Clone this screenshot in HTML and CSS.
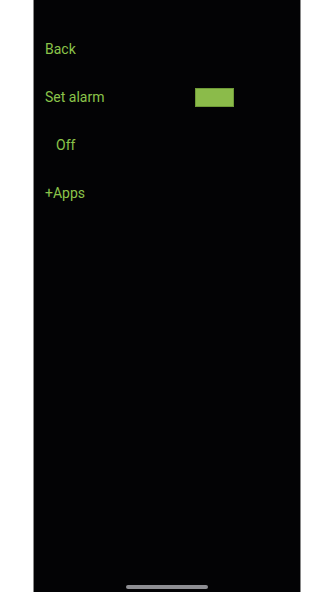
FILE: index.html
```html
<!DOCTYPE html>
<html>
<head>
<meta charset="utf-8">
<link rel="stylesheet" href="styles.css">
</head>
<body>
<div class="screen">
  <div class="menu">
    <div class="row">Back</div>
    <div class="row row-split">
      <span>Set alarm</span>
      <span class="toggle"></span>
    </div>
    <div class="row row-indent">Off</div>
    <div class="row">+Apps</div>
  </div>
  <div class="home-indicator"></div>
</div>
</body>
</html>
```
FILE: styles.css
```css
html, body {
  margin: 0;
  padding: 0;
  background: #ffffff;
}
.screen {
  box-sizing: content-box;
  margin-left: 33px;
  width: 266px;
  height: 592px;
  background: #030305;
  border-left: 1px solid #8a8a8a;
  border-right: 1px solid #8a8a8a;
  display: flex;
  flex-direction: column;
  font-family: Roboto, "Liberation Sans", sans-serif;
  font-size: 14px;
  color: #8bc34a;
}
.menu {
  padding-top: 25px;
  display: flex;
  flex-direction: column;
}
.row {
  height: 48px;
  display: flex;
  align-items: center;
  padding-left: 11px;
}
.row-split {
  justify-content: space-between;
  padding-right: 66px;
}
.row-indent {
  padding-left: 22px;
}
.toggle {
  display: block;
  width: 37px;
  height: 17px;
  background: #8bbb4a;
  border: 1px solid #6f9a38;
}
.home-indicator {
  margin: auto auto 3px;
  width: 82px;
  height: 4px;
  border-radius: 2px;
  background: #8e8e93;
}
```
